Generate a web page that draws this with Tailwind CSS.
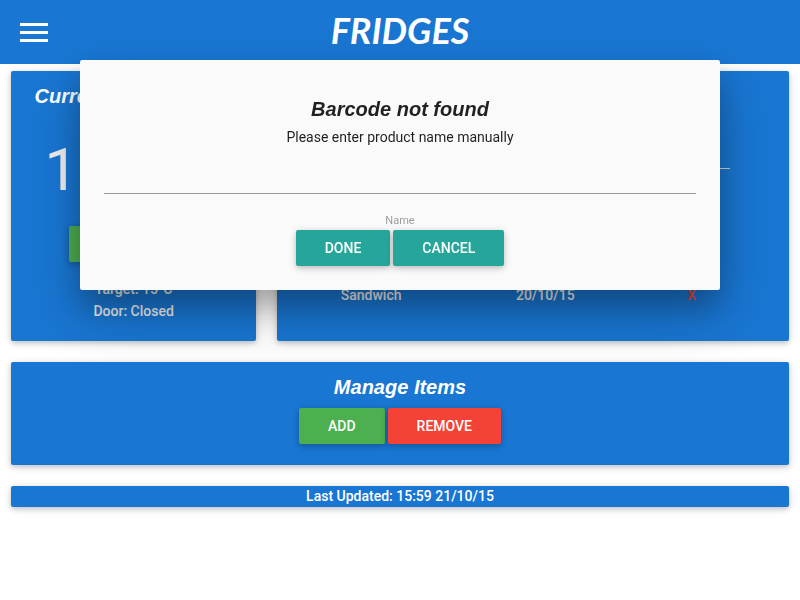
<!DOCTYPE html>
<html lang="en">
<head>
<meta charset="utf-8">
<meta name="viewport" content="width=device-width, initial-scale=1">
<title>Fridges</title>
<script src="https://cdn.jsdelivr.net/npm/@tailwindcss/browser@4"></script>
</head>
<body class="min-h-screen bg-white font-[Roboto,sans-serif] text-[14px] leading-[21px] text-black/87">
<header class="grid h-16 grid-cols-[1fr_auto_1fr] items-center bg-[#1976d2] px-5 text-white">
  <button type="button" aria-label="Open menu" class="justify-self-start">
    <svg class="block" width="28" height="20" viewBox="0 0 28 20" fill="currentColor" aria-hidden="true"><path d="M0 1h28v3H0zM0 9h28v3H0zM0 17h28v3H0z"/></svg>
  </button>
  <h1 class="pb-1 font-[Lato,sans-serif] text-[36px] leading-[60px] font-bold italic">FRIDGES</h1>
</header>
<main class="grid grid-cols-12 gap-[21px] px-[11px] pt-[7px] text-center font-medium text-[#eee]">
  <section class="col-span-4 rounded-xs bg-[#1976d2] pt-[10px] pb-[18px] shadow-[0_2px_5px_rgba(0,0,0,0.16),0_2px_10px_rgba(0,0,0,0.12)]">
    <h2 class="font-['Liberation_Sans',sans-serif] text-[20px] leading-[30px] font-bold whitespace-nowrap text-white italic">Current Temperature</h2>
    <p class="pt-[23px] text-[60px] leading-[72px] font-normal">15.5°C</p>
    <button type="button" class="mt-5 mb-4 h-9 w-[129px] rounded-xs bg-[#4caf50] text-white shadow-[0_2px_5px_rgba(0,0,0,0.16),0_2px_10px_rgba(0,0,0,0.12)]">TARGET</button>
    <p class="leading-[22px]">Target: 15°C</p>
    <p class="leading-[22px]">Door: Closed</p>
  </section>
  <section class="col-span-8 rounded-xs bg-[#1976d2] pt-[10px] pr-[59px] pb-5 pl-7 shadow-[0_2px_5px_rgba(0,0,0,0.16),0_2px_10px_rgba(0,0,0,0.12)]">
    <h2 class="font-['Liberation_Sans',sans-serif] text-[20px] leading-[30px] font-bold text-white italic">Contents</h2>
    <table class="mt-[6px] w-full table-fixed">
      <colgroup><col class="w-[31%]"><col class="w-[51%]"><col class="w-[18%]"></colgroup>
      <thead class="border-b border-[#d0d0d0]"><tr class="h-[51px]"><th class="font-medium">Item</th><th class="font-medium">Expires</th><th aria-label="Remove"></th></tr></thead>
      <tbody>
        <tr class="h-[51px]"><td>Milk</td><td>24/10/15</td><td><button type="button" class="text-[#f44336]">X</button></td></tr>
        <tr class="h-[51px]"><td>Cheese</td><td>28/10/15</td><td><button type="button" class="text-[#f44336]">X</button></td></tr>
        <tr class="h-[51px]"><td>Sandwich</td><td>20/10/15</td><td><button type="button" class="text-[#f44336]">X</button></td></tr>
      </tbody>
    </table>
  </section>
  <section class="col-span-12 rounded-xs bg-[#1976d2] pt-[10px] pb-[21px] shadow-[0_2px_5px_rgba(0,0,0,0.16),0_2px_10px_rgba(0,0,0,0.12)]">
    <h2 class="font-['Liberation_Sans',sans-serif] text-[20px] leading-[30px] font-bold text-white italic">Manage Items</h2>
    <div class="mt-[6px] flex justify-center gap-[3px] text-white">
      <button type="button" class="h-9 rounded-xs bg-[#4caf50] px-[29px] shadow-[0_2px_5px_rgba(0,0,0,0.16),0_2px_10px_rgba(0,0,0,0.12)]">ADD</button>
      <button type="button" class="h-9 rounded-xs bg-[#f44336] px-[29px] shadow-[0_2px_5px_rgba(0,0,0,0.16),0_2px_10px_rgba(0,0,0,0.12)]">REMOVE</button>
    </div>
  </section>
  <p class="col-span-12 rounded-xs bg-[#1976d2] text-white shadow-[0_2px_5px_rgba(0,0,0,0.16),0_2px_10px_rgba(0,0,0,0.12)]">Last Updated: 15:59 21/10/15</p>
</main>
<dialog open aria-labelledby="dialog-title" class="fixed inset-x-0 top-[10%] mx-auto w-4/5 max-w-none rounded-xs bg-[#fafafa] p-6 text-center text-black/87 shadow-[0_16px_28px_rgba(0,0,0,0.22),0_25px_55px_rgba(0,0,0,0.21)]">
  <h2 id="dialog-title" class="pt-[9px] pb-[2px] font-['Liberation_Sans',sans-serif] text-[20px] leading-[32px] font-bold italic">Barcode not found</h2>
  <p>Please enter product name manually</p>
  <form>
    <div class="flex flex-col">
      <input id="name" type="text" class="h-[46px] border-b border-[#9e9e9e] bg-transparent text-center outline-none">
      <label for="name" class="pt-[19px] pb-px text-[11px] leading-[16px] text-[#9e9e9e]">Name</label>
    </div>
    <div class="flex justify-center gap-[3px] font-medium text-white">
      <button type="button" class="h-9 rounded-xs bg-[#26a69a] px-[29px] shadow-[0_2px_5px_rgba(0,0,0,0.16),0_2px_10px_rgba(0,0,0,0.12)]">DONE</button>
      <button type="button" class="h-9 rounded-xs bg-[#26a69a] px-[29px] shadow-[0_2px_5px_rgba(0,0,0,0.16),0_2px_10px_rgba(0,0,0,0.12)]">CANCEL</button>
    </div>
  </form>
</dialog>
</body>
</html>
